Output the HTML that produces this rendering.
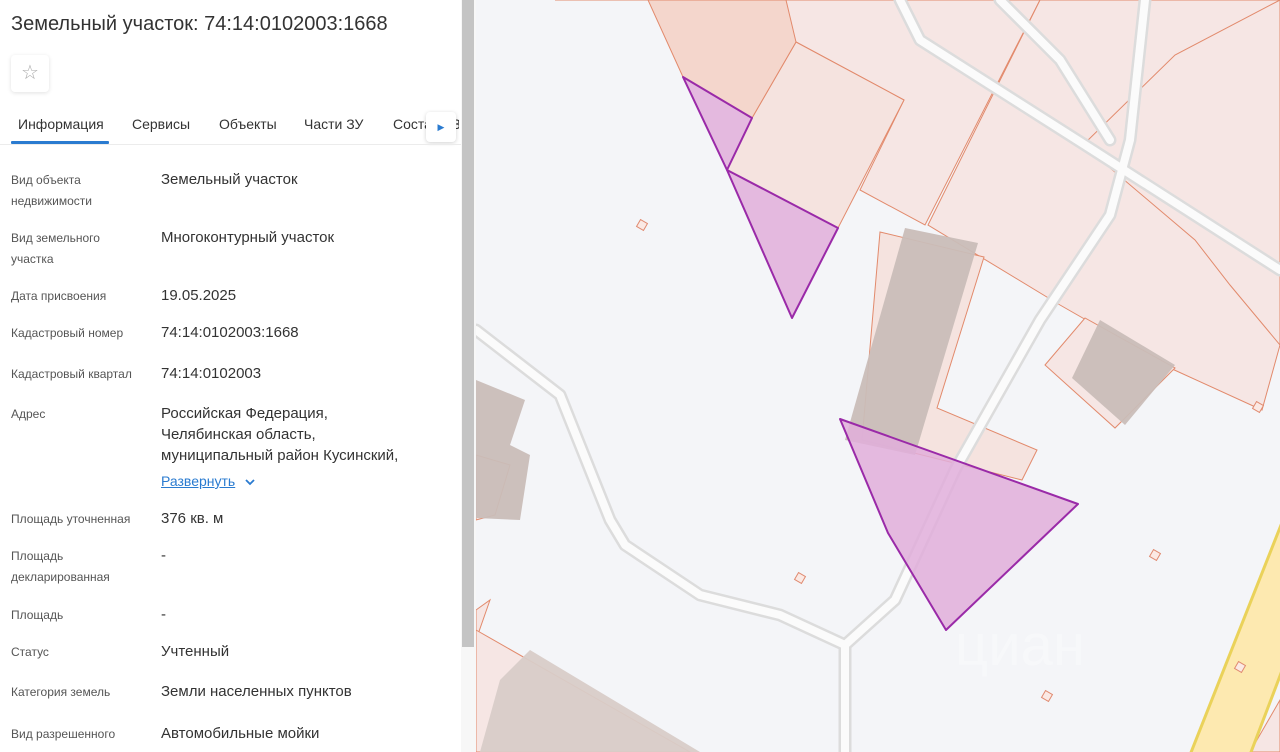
<!DOCTYPE html>
<html><head><meta charset="utf-8"><style>
*{margin:0;padding:0;box-sizing:border-box}
body{width:1280px;height:752px;overflow:hidden;position:relative;background:#f4f5f8;font-family:"Liberation Sans",sans-serif}
#panel{position:absolute;left:0;top:0;width:461px;height:752px;background:#fff;color:#333}
.t{position:absolute;white-space:nowrap}
.l{position:absolute;left:11px;font-size:12px;color:#555;line-height:21px}
.v{position:absolute;left:161px;font-size:15px;color:#333;line-height:21px}
</style></head><body>
<svg style="position:absolute;left:0;top:0" width="1280" height="752" viewBox="0 0 1280 752">
<rect x="461" y="0" width="819" height="752" fill="#f4f5f8"/>
<g fill="#f6e6e4" stroke="#e28a6c" stroke-width="1">
<polygon points="555,0 1040,0 925,225 860,190 904,100 796,42 648,0"/>
<polygon points="1040,0 1280,0 1280,345 1262,410 1170,368 1060,305 928,225"/>
<polygon points="1083,145 1175,55 1280,0 1280,345 1230,285 1195,240"/>
<polygon points="796,42 904,100 838,228 727,170 752,118" fill="#f5e3df"/>
<polygon points="648,0 786,0 796,42 752,118 683,77" fill="#f4d6cc"/>
<polygon points="880,232 984,257 937,408 1037,450 1022,480 862,440" fill="#f5e3df"/>
<polygon points="1045,365 1085,318 1175,368 1115,428" />
<polygon points="476,610 490,600 476,640"/>
<polygon points="476,630 690,752 476,752"/>
<polygon points="476,455 510,465 495,515 476,520"/>
<polygon points="1250,752 1280,700 1280,752"/>
</g>
<g fill="#c9bdb8" opacity=".95">
<polygon points="905,228 978,243 915,455 845,440"/>
<polygon points="1100,320 1175,365 1125,425 1072,378"/>
<polygon points="476,380 525,400 510,445 530,455 520,520 476,518"/>
<polygon points="530,650 700,752 480,752 500,680" fill="#d8ccc8"/>
</g>
<g fill="none" stroke-linejoin="round" stroke-linecap="round">
<g stroke="#dcdcdc" stroke-width="13">
<path d="M476,330 L560,395 L610,520 L625,545 L700,595 L780,615 L845,645 L845,760"/>
<path d="M845,645 L895,600 L955,470 L1040,320 L1110,215 L1130,140 L1145,0"/>
<path d="M900,0 L920,40 L1085,145 L1280,270"/>
<path d="M1000,0 L1060,60 L1110,140"/>
</g>
<g stroke="#fbfbfb" stroke-width="8">
<path d="M476,330 L560,395 L610,520 L625,545 L700,595 L780,615 L845,645 L845,760"/>
<path d="M845,645 L895,600 L955,470 L1040,320 L1110,215 L1130,140 L1145,0"/>
<path d="M900,0 L920,40 L1085,145 L1280,270"/>
<path d="M1000,0 L1060,60 L1110,140"/>
</g>
</g>
<polygon points="1188,760 1283,520 1283,668 1248,760" fill="#fde9b0" stroke="#ead25a" stroke-width="3"/>
<g fill="#fbe9e4" stroke="#e08a70" stroke-width="1">
<rect x="638" y="221" width="8" height="8" transform="rotate(30 642 225)"/>
<rect x="796" y="574" width="8" height="8" transform="rotate(30 800 578)"/>
<rect x="1151" y="551" width="8" height="8" transform="rotate(30 1155 555)"/>
<rect x="1254" y="403" width="8" height="8" transform="rotate(30 1258 407)"/>
<rect x="1043" y="692" width="8" height="8" transform="rotate(30 1047 696)"/>
<rect x="1236" y="663" width="8" height="8" transform="rotate(30 1240 667)"/>
</g>
<g fill="#e0aedb" fill-opacity=".85" stroke="#9a2aa8" stroke-width="2" stroke-linejoin="round">
<polygon points="683,77 752,118 727,170"/>
<polygon points="727,170 838,228 792,318"/>
<polygon points="840,419 1078,504 946,630 888,533"/>
</g>
<text x="955" y="665" font-family="Liberation Sans" font-size="58" fill="#fff" fill-opacity=".3">циан</text>
<rect x="461" y="0" width="15" height="752" fill="#f7f7f7"/>
<rect x="462" y="0" width="12" height="647" fill="#c4c4c4"/>
</svg>
<div id="panel">
<div class="t" style="left:11px;top:13px;font-size:20px;color:#333">Земельный участок: 74:14:0102003:1668</div>
<div class="t" style="left:11px;top:55px;width:38px;height:37px;border-radius:4px;box-shadow:0 1px 4px rgba(0,0,0,.12);background:#fff;text-align:center;line-height:36px;font-size:20px;color:#aaa">☆</div>
<div class="t" style="left:18px;top:116px;font-size:14px;color:#333">Информация</div>
<div class="t" style="left:132px;top:116px;font-size:14px;color:#333">Сервисы</div>
<div class="t" style="left:219px;top:116px;font-size:14px;color:#333">Объекты</div>
<div class="t" style="left:304px;top:116px;font-size:14px;color:#333">Части ЗУ</div>
<div class="t" style="left:393px;top:116px;font-size:14px;color:#333;width:66px;overflow:hidden">Состав ЕЗП</div>
<div class="t" style="left:426px;top:112px;width:30px;height:30px;background:#fff;border-radius:4px;box-shadow:0 1px 4px rgba(0,0,0,.18);text-align:center;line-height:30px;font-size:9px;color:#2a7bd0">▶</div>
<div class="t" style="left:0;top:144px;width:461px;height:1px;background:#ececec"></div>
<div class="t" style="left:11px;top:141px;width:98px;height:3px;background:#2a7bd0;border-radius:1px"></div>

<div class="l" style="top:170px">Вид объекта<br>недвижимости</div><div class="v" style="top:169px">Земельный участок</div>
<div class="l" style="top:228px">Вид земельного<br>участка</div><div class="v" style="top:227px">Многоконтурный участок</div>
<div class="l" style="top:286px">Дата присвоения</div><div class="v" style="top:285px">19.05.2025</div>
<div class="l" style="top:323px">Кадастровый номер</div><div class="v" style="top:322px">74:14:0102003:1668</div>
<div class="l" style="top:364px">Кадастровый квартал</div><div class="v" style="top:363px">74:14:0102003</div>
<div class="l" style="top:404px">Адрес</div><div class="v" style="top:403px">Российская Федерация,<br>Челябинская область,<br>муниципальный район Кусинский,</div>
<div class="t" style="left:161px;top:473px;font-size:14px;color:#2a7bd0;text-decoration:underline">Развернуть</div>
<svg class="t" style="left:244px;top:477px" width="12" height="10"><path d="M2,3 L6,7 L10,3" fill="none" stroke="#2a7bd0" stroke-width="1.8"/></svg>
<div class="l" style="top:509px">Площадь уточненная</div><div class="v" style="top:508px">376 кв. м</div>
<div class="l" style="top:546px">Площадь<br>декларированная</div><div class="v" style="top:545px">-</div>
<div class="l" style="top:605px">Площадь</div><div class="v" style="top:604px">-</div>
<div class="l" style="top:642px">Статус</div><div class="v" style="top:641px">Учтенный</div>
<div class="l" style="top:682px">Категория земель</div><div class="v" style="top:681px">Земли населенных пунктов</div>
<div class="l" style="top:724px">Вид разрешенного</div><div class="v" style="top:723px">Автомобильные мойки</div>
</div>
</body></html>
